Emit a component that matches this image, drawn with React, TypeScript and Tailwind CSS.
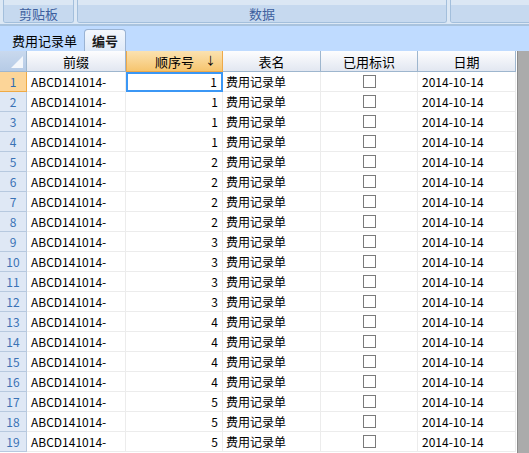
import React from 'react';

const cols = [
  { key: 'prefix', title: '前缀', w: 'w-[99px]' },
  { key: 'seq', title: '顺序号', w: 'w-[97px]' },
  { key: 'name', title: '表名', w: 'w-[98px]' },
  { key: 'used', title: '已用标识', w: 'w-[97px]' },
  { key: 'date', title: '日期', w: 'w-[98px]' },
];

const seqs = [1, 1, 1, 1, 2, 2, 2, 2, 3, 3, 3, 3, 4, 4, 4, 4, 5, 5, 5];

const App: React.FC = () => {
  return (
    <div
      className="w-[529px] h-[453px] overflow-hidden bg-white text-[12px] text-black"
      style={{ fontFamily: '"Noto Sans CJK SC", "Liberation Sans", sans-serif' }}
    >
      {/* Ribbon */}
      <div className="h-[26px] bg-[#dce8f5] border-b-[2px] border-[#a9c3de] flex gap-[3px] pl-[3px] overflow-hidden">
        <div className="w-[71px] shrink-0 h-[23px] flex flex-col border border-t-0 border-[#a3bfdc] rounded-b-[3px] overflow-hidden">
          <div className="h-[5px] bg-[#dbe7f4]" />
          <div className="flex-1 bg-[#c6d9ef] flex items-center justify-center text-[#3d5f9e] text-[13px] leading-[17px]">剪贴板</div>
        </div>
        <div className="w-[370px] shrink-0 h-[23px] flex flex-col border border-t-0 border-[#a3bfdc] rounded-b-[3px] overflow-hidden">
          <div className="h-[5px] bg-[#dbe7f4]" />
          <div className="flex-1 bg-[#c6d9ef] flex items-center justify-center text-[#3d5f9e] text-[13px] leading-[17px]">数据</div>
        </div>
        <div className="w-[100px] shrink-0 h-[23px] flex flex-col border border-t-0 border-[#a3bfdc] rounded-b-[3px] overflow-hidden">
          <div className="h-[5px] bg-[#dbe7f4]" />
          <div className="flex-1 bg-[#c6d9ef]" />
        </div>
      </div>

      {/* Tabs */}
      <div className="h-[25px] bg-[#bfdbff] flex items-end pl-[6px]">
        <div className="h-[22px] px-[6px] flex items-center text-[13px] leading-none">费用记录单</div>
        <div className="h-[22px] ml-[1px] w-[42px] flex items-center justify-center bg-gradient-to-b from-[#f4f8fd] to-[#dfeaf8] border border-b-0 border-[#9ab3d3] rounded-t-[4px] text-[13px] font-bold leading-none text-[#1b1b1b]">
          编号
        </div>
      </div>

      {/* Grid */}
      <div className="flex">
        <div className="w-[517px] shrink-0">
          {/* Header */}
          <div className="flex h-[21px]">
            <div className="w-[27px] h-full bg-gradient-to-b from-[#c9d9ee] to-[#b6cbe6] border-r border-b border-[#9eb6ce] relative">
              <div className="absolute right-[3px] bottom-[3px] w-0 h-0 border-l-[12px] border-l-transparent border-b-[12px] border-b-[#f4f7fb]" />
            </div>
            {cols.map((c) =>
              c.key === 'seq' ? (
                <div
                  key={c.key}
                  className={`${c.w} h-full bg-gradient-to-b from-[#fbe2b0] to-[#f6c56e] border border-t-0 border-[#eda94a] flex items-center justify-center relative leading-none text-[13px]`}
                >
                  {c.title}
                  <span className="absolute right-[6px] top-[4px] text-[11px]">↓</span>
                </div>
              ) : (
                <div
                  key={c.key}
                  className={`${c.w} h-full bg-gradient-to-b from-[#fdfdfe] to-[#e2e7f1] border-r border-b border-[#9eb6ce] flex items-center justify-center leading-none text-[13px]`}
                >
                  {c.title}
                </div>
              )
            )}
          </div>
          {/* Rows */}
          {seqs.map((s, i) => (
            <div key={i} className="flex h-[20px]">
              <div
                className={`w-[27px] h-full flex items-center justify-center leading-none border-r border-b ${
                  i === 0
                    ? 'bg-[#fcd598] border-[#efaa45] text-[#2f6cb3]'
                    : 'bg-[#dfe8f5] border-[#b7c9df] text-[#3a72b5]'
                }`}
              >
                {i + 1}
              </div>
              <div className="w-[99px] h-full border-r border-b border-[#ececec] flex items-center pl-[4px] leading-none">
                ABCD141014-
              </div>
              <div
                className={`w-[97px] h-full flex items-center justify-end pr-[4px] leading-none ${
                  i === 0 ? 'border-2 border-[#3b97f5] pr-[3px]' : 'border-r border-b border-[#ececec]'
                }`}
              >
                {s}
              </div>
              <div className="w-[98px] h-full border-r border-b border-[#ececec] flex items-center pl-[3px] leading-none">
                费用记录单
              </div>
              <div className="w-[97px] h-full border-r border-b border-[#ececec] flex items-center justify-center">
                <div className="w-[13px] h-[13px] border border-[#7a7a7a] bg-white" />
              </div>
              <div className="w-[98px] h-full border-r border-b border-[#ececec] flex items-center pl-[4px] leading-none">
                2014-10-14
              </div>
            </div>
          ))}
        </div>
        <div className="flex-1 bg-[#ababab] border-l border-[#8c8c8c] h-[402px]" />
      </div>
    </div>
  );
};

export default App;
